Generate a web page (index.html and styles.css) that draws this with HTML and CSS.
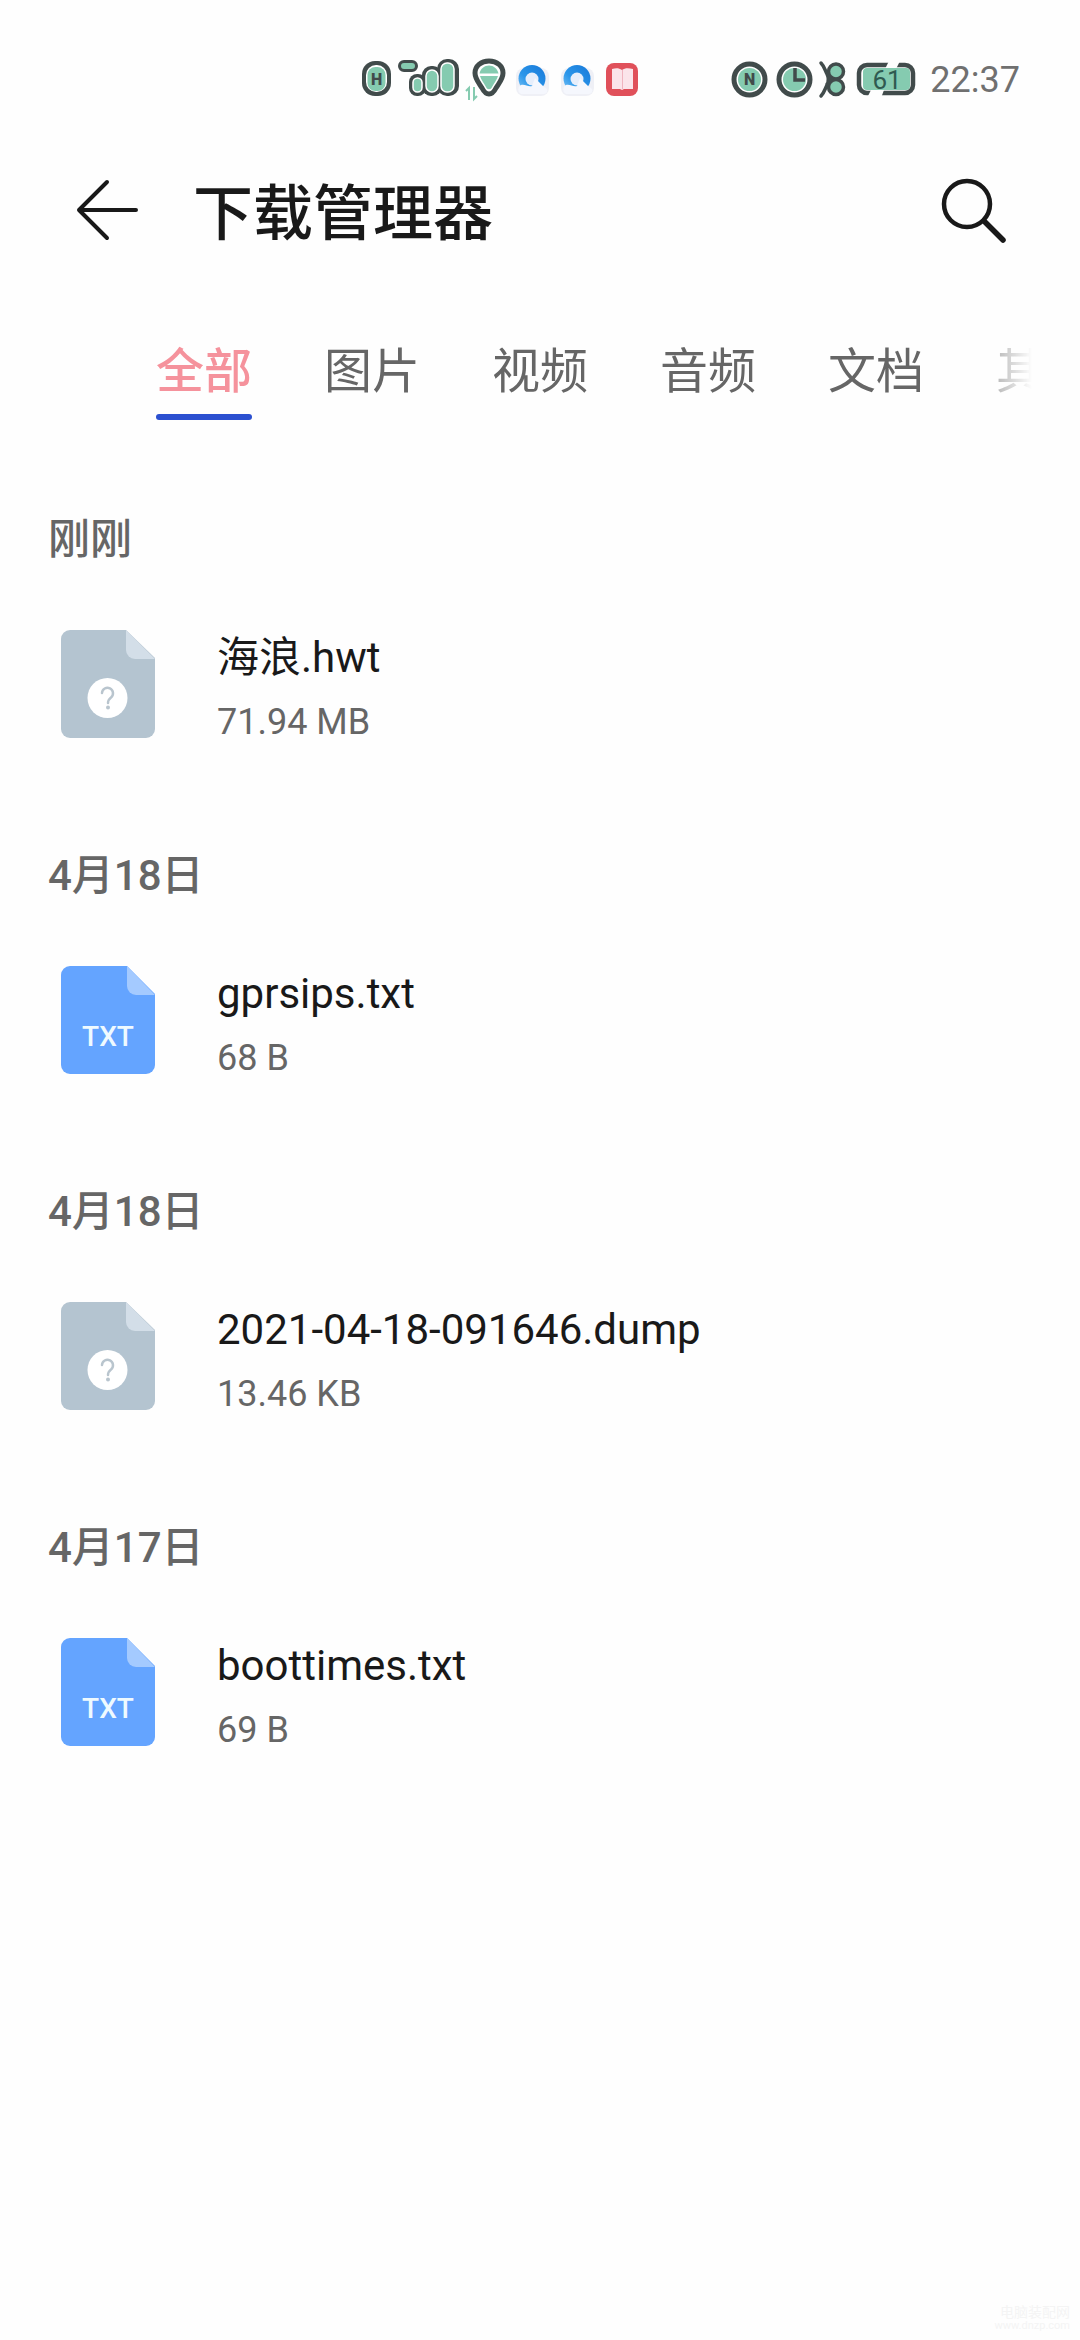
FILE: index.html
```html
<!DOCTYPE html>
<html lang="zh-CN">
<head>
<meta charset="utf-8">
<meta name="viewport" content="width=device-width, initial-scale=1">
<title>下载管理器</title>
<link rel="stylesheet" href="styles.css">
</head>
<body>
<svg class="defs" aria-hidden="true">
  <defs>
    <linearGradient id="ring" x1="0" y1="1" x2="1" y2="0">
      <stop offset="0" stop-color="#7cc4f6"/><stop offset="0.4" stop-color="#2a96ea"/><stop offset="1" stop-color="#1878d8"/>
    </linearGradient>
    <symbol id="browser" viewBox="0 0 38 48">
      <rect x="2" y="12" width="33" height="28" rx="8" fill="#eff0f6"/>
      <circle cx="18" cy="22.500" r="13.500" fill="url(#ring)"/>
      <circle cx="18" cy="23" r="6.500" fill="#e6eefb"/>
      <path d="M7 38a5 5 0 0 1 0-9c4-1 7 2 11 1l3-8 9 9c3 1 4 3 3 5-1 2-3 2-5 2z" fill="#f5f7fd"/>
    </symbol>
    <symbol id="file-unknown" viewBox="0 0 94 108">
      <path d="M9 0H65L94 28V99a9 9 0 0 1-9 9H9a9 9 0 0 1-9-9V9a9 9 0 0 1 9-9z" fill="#b4c4d0"/>
      <path d="M65 0L94 29H74a9 9 0 0 1-9-9z" fill="#d3dee8"/>
      <circle cx="46.500" cy="68" r="20" fill="#fff"/>
      <path d="M41 63a5.500 5.500 0 1 1 9 4.500c-2 1.500-3 3-3 5.500" fill="none" stroke="#b9c5ce" stroke-width="2.500" stroke-linecap="round"/>
      <circle cx="47" cy="77.500" r="2" fill="#b9c5ce"/>
    </symbol>
    <symbol id="file-txt" viewBox="0 0 94 108">
      <path d="M9 0H66L94 28V99a9 9 0 0 1-9 9H9a9 9 0 0 1-9-9V9a9 9 0 0 1 9-9z" fill="#64a4ff"/>
      <path d="M66 0L94 29H75a9 9 0 0 1-9-9z" fill="#a4caff"/>
    </symbol>
  </defs>
</svg>

<div class="status">
  <div class="status-group">
    <svg width="31" height="48">
      <rect x="2" y="5" width="29" height="35" rx="13" fill="#414b4b"/>
      <rect x="6" y="9" width="21" height="27" rx="10" fill="#fff"/>
      <rect x="7.500" y="11" width="18" height="24" rx="8" fill="#85cbb0"/>
      <text x="16.500" y="29" text-anchor="middle" font-size="16" class="glyph-heavy">H</text>
    </svg>
    <svg width="63" height="48">
      <rect x="2.500" y="5.500" width="17" height="9" rx="4.500" fill="#85cbb0" stroke="#414b4b" stroke-width="3"/>
      <g fill="#414b4b"><rect x="12" y="18" width="17" height="22" rx="8"/><rect x="25" y="10" width="20" height="30" rx="9"/><rect x="40" y="3" width="22" height="37" rx="10"/></g>
      <g fill="#85cbb0" stroke="#fff" stroke-width="1.500"><rect x="16" y="22" width="9" height="14" rx="4.500"/><rect x="29" y="14" width="12" height="22" rx="6"/><rect x="44" y="7" width="13" height="29" rx="6"/></g>
    </svg>
    <svg width="42" height="48">
      <path d="M23 5c8 0 14 5 14 12 0 6-4 10-7 15-2 4-4 6-7 6s-5-2-7-6c-3-5-7-9-7-15C9 10 15 5 23 5z" fill="#fff" stroke="#414b4b" stroke-width="5" stroke-linejoin="round"/>
      <path d="M13.500 17.500c1-5 5-8 9.500-8s8.500 3 9.500 8zM14 20h18c-1 4-4 7-6 11-1 3-5 3-6 0-2-4-5-7-6-11z" fill="#85cbb0"/>
      <path d="M3 44V32L0 35M8 31v12l3-3" fill="none" stroke="#85cbb0" stroke-width="2"/>
    </svg>
    <svg width="38" height="48"><use href="#browser" width="38" height="48"/></svg>
    <svg width="39" height="48"><use href="#browser" width="38" height="48" x="1"/></svg>
    <svg width="38" height="48">
      <rect x="3" y="7" width="32" height="33" rx="8" fill="#e0505a"/>
      <path d="M9 13c4-1 7-1 10 1 3-2 6-2 11-1v20H21l-2 1-2-1H9z" fill="#fbe4ea"/>
      <path d="M19.500 14v19" stroke="#f0b4bf"/>
    </svg>
  </div>
  <div class="status-group">
    <svg width="39" height="48">
      <circle cx="19.500" cy="23.500" r="15.500" fill="#fff" stroke="#414b4b" stroke-width="5"/>
      <circle cx="19.500" cy="23.500" r="11.500" fill="#85cbb0"/>
      <text x="19.500" y="29" text-anchor="middle" font-size="16" class="glyph-heavy">N</text>
    </svg>
    <svg width="38" height="48">
      <circle cx="19.500" cy="23.500" r="15.500" fill="#fff" stroke="#414b4b" stroke-width="5"/>
      <circle cx="19.500" cy="23.500" r="11.500" fill="#85cbb0"/>
      <path d="M20 12v12h10" fill="none" stroke="#414b4b" stroke-width="3.500"/>
    </svg>
    <svg width="28" height="48">
      <g fill="#85cbb0" stroke="#414b4b" stroke-width="3.500"><circle cx="17" cy="15.500" r="7.500"/><circle cx="17" cy="31" r="7.500"/></g>
      <path d="M2 7c3 3 4 7 6 11 2 4 2 7 0 11s-3 8-6 11M8 18l4 5-4 5" fill="none" stroke="#414b4b" stroke-width="3.500" stroke-linecap="round"/>
    </svg>
    <svg width="71" height="48">
      <rect x="6" y="9" width="54" height="28" rx="8" fill="#fff" stroke="#414b4b" stroke-width="4.500"/>
      <path d="M36 5h11l-4 8H32zM18 34h13l-3 8H14z" fill="#fefefe"/>
      <rect x="10" y="12" width="47" height="22" rx="4" fill="#85cbb0"/>
      <text x="34" y="33" text-anchor="middle" font-size="26" class="glyph-battery">61</text>
    </svg>
    <time class="clock">22:37</time>
  </div>
</div>

<header class="appbar">
  <button class="icon-button" type="button" aria-label="返回">
    <svg width="64" height="64" fill="none" stroke="#191919" stroke-width="4" stroke-linecap="round" stroke-linejoin="round"><path d="M32 4L4 32l28 28M4 32h57"/></svg>
  </button>
  <h1 class="title">下载管理器</h1>
  <button class="icon-button" type="button" aria-label="搜索">
    <svg width="66" height="66" fill="none" stroke="#191919" stroke-linecap="round"><circle cx="26" cy="27" r="23" stroke-width="4.500"/><path d="M43 44L62 63" stroke-width="5.500"/></svg>
  </button>
</header>

<nav class="tabs" role="tablist" aria-label="文件类型">
  <button class="tab" type="button" role="tab" aria-selected="true">全部</button>
  <button class="tab" type="button" role="tab" aria-selected="false">图片</button>
  <button class="tab" type="button" role="tab" aria-selected="false">视频</button>
  <button class="tab" type="button" role="tab" aria-selected="false">音频</button>
  <button class="tab" type="button" role="tab" aria-selected="false">文档</button>
  <button class="tab" type="button" role="tab" aria-selected="false">其他</button>
</nav>

<main class="downloads">
  <section class="group">
    <h2 class="date">刚刚</h2>
    <a class="file" href="#">
      <svg class="file-icon" aria-hidden="true"><use href="#file-unknown"/></svg>
      <span class="info"><span class="name">海浪.hwt</span><span class="size">71.94 MB</span></span>
    </a>
  </section>
  <section class="group">
    <h2 class="date">4月18日</h2>
    <a class="file" href="#">
      <svg class="file-icon" aria-hidden="true"><use href="#file-txt"/><text class="file-type" x="47" y="80" text-anchor="middle">TXT</text></svg>
      <span class="info"><span class="name">gprsips.txt</span><span class="size">68 B</span></span>
    </a>
  </section>
  <section class="group">
    <h2 class="date">4月18日</h2>
    <a class="file" href="#">
      <svg class="file-icon" aria-hidden="true"><use href="#file-unknown"/></svg>
      <span class="info"><span class="name">2021-04-18-091646.dump</span><span class="size">13.46 KB</span></span>
    </a>
  </section>
  <section class="group">
    <h2 class="date">4月17日</h2>
    <a class="file" href="#">
      <svg class="file-icon" aria-hidden="true"><use href="#file-txt"/><text class="file-type" x="47" y="80" text-anchor="middle">TXT</text></svg>
      <span class="info"><span class="name">boottimes.txt</span><span class="size">69 B</span></span>
    </a>
  </section>
</main>

<footer class="credit">
  <span class="credit-name">电脑装配网</span>
  <span class="credit-site">www.dnzp.com</span>
</footer>
</body>
</html>
```
FILE: styles.css
```css
* {
  box-sizing: border-box;
}

body {
  display: flex;
  flex-direction: column;
  min-height: 100vh;
  margin: 0;
  background: #fefefe;
  color: #191919;
  font-family: Roboto, "Noto Sans CJK SC", sans-serif;
}

button {
  padding: 0;
  border: 0;
  background: none;
  color: inherit;
  font: inherit;
}

svg {
  display: block;
  flex: none;
  overflow: visible;
}

.defs {
  width: 0;
  height: 0;
}

.status {
  display: flex;
  justify-content: space-between;
  padding: 56px 60px 0 360px;
}

.status-group {
  display: flex;
  align-items: center;
  gap: 6px;
}

.clock {
  color: #707070;
  font-size: 36px;
  line-height: 48px;
}

.glyph-heavy {
  fill: #414b4b;
  font-weight: 900;
}

.glyph-battery {
  fill: #2f5a50;
}

.appbar {
  display: flex;
  align-items: center;
  height: 108px;
  margin-top: 52px;
  padding: 0 73px 0 75px;
}

.title {
  flex: 1;
  margin: 0 0 0 54px;
  padding-top: 10px;
  font-size: 60px;
  font-weight: 500;
  line-height: 88px;
}

.tabs {
  display: flex;
  gap: 72px;
  margin: 72px 48px 0;
  padding-left: 108px;
  overflow: hidden;
  -webkit-mask-image: linear-gradient(to left, transparent, #000 80px);
  mask-image: linear-gradient(to left, transparent, #000 80px);
}

.tab {
  flex: none;
  padding-bottom: 12px;
  color: #666;
  font-size: 48px;
  line-height: 72px;
}

.tab[aria-selected="true"] {
  color: #f5929c;
  font-weight: 500;
}

.tab[aria-selected="true"]::after {
  content: "";
  display: block;
  height: 6px;
  margin: 6px 0 -12px;
  border-radius: 3px;
  background: #2b50d0;
}

.downloads {
  display: flex;
  flex-direction: column;
  gap: 104px;
  margin-top: 92px;
  padding: 0 48px;
}

.date {
  margin: 0;
  color: #666;
  font-size: 42px;
  font-weight: 500;
  line-height: 56px;
}

.file {
  display: flex;
  align-items: flex-start;
  gap: 62px;
  height: 116px;
  margin-top: 60px;
  padding: 2px 0 0 13px;
  color: inherit;
  text-decoration: none;
}

.file-icon {
  width: 94px;
  height: 108px;
}

.file-type {
  fill: #effaff;
  font-size: 28px;
  font-weight: 500;
}

.info {
  display: flex;
  flex-direction: column;
  gap: 12px;
}

.name {
  font-size: 42px;
  line-height: 56px;
}

.size {
  color: #666;
  font-size: 36px;
  line-height: 48px;
}

.credit {
  display: flex;
  flex-direction: column;
  align-items: flex-end;
  margin-top: auto;
  padding: 0 10px 8px;
  color: #f4f4f4;
}

.credit-name {
  font-size: 14px;
  line-height: 16px;
}

.credit-site {
  font-size: 11px;
  line-height: 12px;
}
```
